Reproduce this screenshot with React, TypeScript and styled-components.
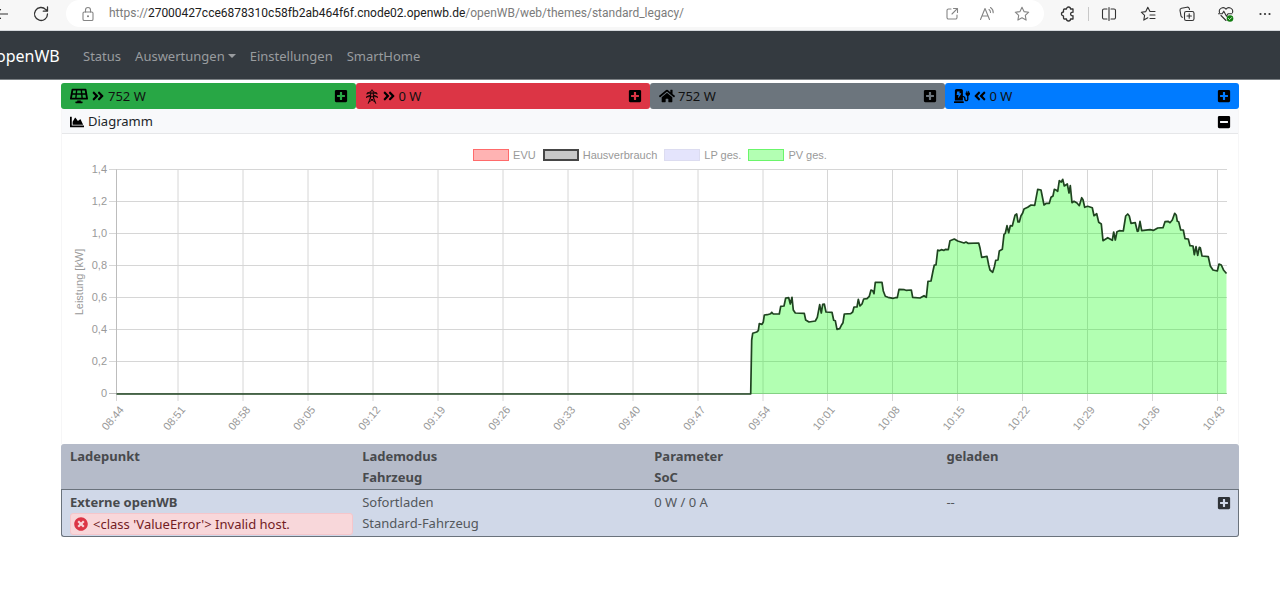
import React from "react";
import styled, { createGlobalStyle } from "styled-components";
import {
  FaAngleDoubleLeft,
  FaAngleDoubleRight,
  FaChargingStation,
  FaChartArea,
  FaHome,
  FaMinusSquare,
  FaPlusSquare,
  FaSolarPanel,
  FaTimesCircle,
} from "react-icons/fa";

const GlobalStyle = createGlobalStyle`
  *, *::before, *::after { box-sizing: border-box; }
  body {
    margin: 0;
    background: #fff;
    color: #212529;
    font-family: "Noto Sans", "Open Sans", sans-serif;
    font-size: 13px;
    line-height: 21px;
  }
  button { font: inherit; color: inherit; border: 0; padding: 0; background: none; cursor: pointer; }
`;

/* ---------- browser bar ---------- */

const BrowserBar = styled.div`
  display: flex;
  align-items: center;
  height: 31px;
  padding: 0 6px 3px 0;
  background: #f7f7f7;
  border-bottom: 1px solid #d5d8dc;
  overflow: hidden;
`;

const ToolButton = styled.button<{ $muted?: boolean }>`
  display: flex;
  flex: none;
  align-items: center;
  justify-content: center;
  width: 18px;
  height: 18px;
  color: ${(p) => (p.$muted ? "#858585" : "#333")};
`;

const NavTools = styled.div`
  display: flex;
  gap: 24px;
  width: 66px;
  margin-left: -10px;
  margin-right: 10px;
`;

const AddressBar = styled.div`
  display: flex;
  flex: 1;
  align-items: center;
  height: 27px;
  padding: 0 13px;
  border-radius: 14px;
  background: #fff;
`;

const Address = styled.div`
  flex: 1;
  min-width: 0;
  margin-left: 12px;
  overflow: hidden;
  white-space: nowrap;
  color: #7b7b7b;
  font-family: Roboto, sans-serif;
  font-size: 12px;

  b { color: #202020; font-weight: 400; }
`;

const AddressTools = styled.div`
  display: flex;
  gap: 17px;
`;

const BarTools = styled.div`
  display: flex;
  align-items: center;
  gap: 21px;
  margin-left: 15px;
`;

const Separator = styled.span`
  width: 1px;
  height: 14px;
  margin: 0 -10px;
  background: #c8c8c8;
`;

const Svg = ({ children, size = 18 }: { children: React.ReactNode; size?: number }) => (
  <svg
    width={size}
    height={size}
    viewBox="0 0 18 18"
    fill="none"
    stroke="currentColor"
    strokeWidth="1.1"
    strokeLinecap="round"
    strokeLinejoin="round"
    aria-hidden="true"
  >
    {children}
  </svg>
);

const STAR = "M9 2.3l2 4.3 4.7.6-3.4 3.2.8 4.7L9 12.8l-4.1 2.3.8-4.7L2.3 7.2 7 6.6z";

/* ---------- page navigation ---------- */

const Navbar = styled.nav`
  display: flex;
  align-items: center;
  height: 49px;
  padding-top: 2px;
  background: #343a40;
  border-bottom: 1px solid #7b8084;
  overflow: hidden;
`;

const Brand = styled.a`
  width: 66px;
  margin-left: -4px;
  margin-right: 21px;
  color: #fff;
  font-size: 16px;
  text-decoration: none;
`;

const NavLinks = styled.div`
  display: flex;
  gap: 14px;
`;

const NavLink = styled.a`
  display: flex;
  align-items: center;
  gap: 3px;
  color: #999c9f;
  text-decoration: none;
`;

const Caret = styled.span`
  border: 4px solid transparent;
  border-top-color: currentColor;
  border-bottom: 0;
`;

/* ---------- page content ---------- */

const Page = styled.main`
  padding: 3px 41px 0 61px;
`;

const Tiles = styled.div`
  display: grid;
  grid-template-columns: repeat(4, 1fr);
`;

const Tile = styled.section<{ $color: string }>`
  display: flex;
  align-items: center;
  justify-content: space-between;
  height: 26px;
  padding: 0 8px 0 9px;
  border-radius: 3px;
  background: ${(p) => p.$color};
  color: #111;

  svg { color: #000; }
`;

const TileValue = styled.div`
  display: flex;
  align-items: center;
  gap: 3px;
`;

const IconButton = styled.button`
  display: flex;
  color: #000;
`;

const Card = styled.section`
  border: 1px solid #f6f6f7;
  border-top: 0;
  border-bottom: 0;
`;

const CardHeader = styled.header`
  display: flex;
  align-items: center;
  justify-content: space-between;
  height: 25px;
  padding: 1px 7px 0 8px;
  background: #f8f9fb;
  border-bottom: 1px solid #e6e7e9;
`;

const CardTitle = styled.h2`
  display: flex;
  align-items: center;
  gap: 4px;
  margin: 0;
  font-size: 13px;
  font-weight: 400;

  svg { color: #000; }
`;

const Legend = styled.div`
  display: flex;
  justify-content: center;
  gap: 7px;
  height: 29px;
  padding-top: 14px;
`;

const LegendItem = styled.button`
  display: flex;
  align-items: center;
  gap: 4px;
  height: 14px;
  color: #999;
  font-family: "Liberation Sans", sans-serif;
  font-size: 11px;
  line-height: 14px;
`;

const Swatch = styled.span<{ $fill: string; $line: string; $strong?: boolean }>`
  width: 36px;
  height: 12px;
  background: ${(p) => p.$fill};
  border: ${(p) => (p.$strong ? 2 : 1)}px solid ${(p) => p.$line};
`;

const Plot = styled.svg`
  display: block;
  width: 100%;
  height: auto;

  text {
    fill: #999;
    font-family: "Liberation Sans", sans-serif;
    font-size: 11px;
  }
`;

const Points = styled.table`
  width: 100%;
  table-layout: fixed;
  border-collapse: separate;
  border-spacing: 0;
  color: #53575b;

  th, td {
    padding: 2px 0 0 9px;
    text-align: left;
    vertical-align: top;
  }
`;

const Column = styled.col`
  width: 24.8%;
`;

const HeadRow = styled.tr`
  height: 45px;
  color: #484a4d;

  th { background: #b5bbc9; }
  th:first-child { border-top-left-radius: 3px; }
  th:last-child { border-top-right-radius: 3px; }
`;

const PointRow = styled.tr`
  height: 48px;

  th, td {
    background: #d0d8e8;
    border: 1px solid #6a727c;
    border-width: 1px 0;
  }
  th:first-child {
    padding-left: 8px;
    border-left-width: 1px;
    border-bottom-left-radius: 3px;
    color: #484a4d;
  }
  td:last-child { border-right-width: 1px; border-bottom-right-radius: 3px; }
`;

const Split = styled.div`
  display: flex;
  align-items: center;
  justify-content: space-between;
  padding-right: 7px;
`;

const Alert = styled.div`
  display: flex;
  align-items: center;
  gap: 5px;
  height: 22px;
  padding-left: 3px;
  border: 1px solid #f5c6cb;
  border-radius: 3px;
  background: #f8d7da;
  color: #721c24;
  font-weight: 400;

  svg { color: #dc3545; }
`;

const Pylon = () => (
  <svg width="14" height="15" viewBox="-1 0 14 15" fill="none" stroke="#000" strokeWidth="0.9" aria-hidden="true">
    <path d="M4.500 9L5 2l1-1.300L7 2l.5 7M1 5.500v-1.300L5 2.700M11 5.500v-1.300L7 2.700M1 4.200h10M.7 9V7.700L5 5.800M11.300 9V7.700L7 5.800M.7 7.700h10.600M2.200 14.700L4.600 8M9.800 14.700L7.400 8M4 9.500l5 3.500M8 9.500L3 13" />
  </svg>
);

const X_TICKS: [number, string][] = [
  [116.5, "08:44"], [178, "08:51"], [243, "08:58"], [308, "09:05"], [373, "09:12"], [438, "09:19"],
  [503, "09:26"], [568, "09:33"], [633, "09:40"], [698, "09:47"], [763, "09:54"], [827.5, "10:01"],
  [892.5, "10:08"], [957.5, "10:15"], [1022.5, "10:22"], [1087.5, "10:29"], [1152.5, "10:36"], [1217.5, "10:43"],
];

const Y_TICKS = ["1,4", "1,2", "1,0", "0,8", "0,6", "0,4", "0,2", "0"];

const SERIES =
  "750.7,394 751.7,340 752.7,333.3 756.7,332 758.3,330.7 759.3,323.7 762,324.3 763.3,322 764.3,315 767.3,314.7 " +
  "770.7,313.7 771.7,312.3 773.3,314 779.3,314 780.7,306.3 784,306 785.7,298 788.7,297.7 790.3,304 792,297.3 " +
  "793.3,310 795.3,313 804.3,313.3 805.7,320 809,322 815.3,321 817.3,317.3 819.7,304.7 821.3,313 822.7,304.3 " +
  "824.3,304 826,312 832,312.3 833.7,320.3 835.3,320.7 837,329.3 839.7,328.7 841.7,324.7 843,322.7 844.3,314 " +
  "850.7,313.7 852.7,312 854,307 857,307 858.3,299.3 860,306 862,304 863.7,299 867,298.7 869.3,296.3 871,290 " +
  "872.7,290.7 874,293.7 875.3,282.3 882,282.3 883.3,291 885.3,296.3 888,297.3 893.3,298.3 895.3,297.7 897.3,297.7 " +
  "899,289.3 904.3,289.7 906,290.3 911.3,290 912.7,297.3 920,298 924,295.7 926.3,297.3 928,281.3 931,281 933,271 " +
  "934.3,265 936,265 937.7,250 939.3,250.7 941.3,249.7 944,250.3 945.3,249.3 948.3,249.7 950,240.7 954.3,239 957.7,241 " +
  "964,243 966,242 968,243.3 978.7,243 980,248 981.7,257.3 987,256.3 988.7,265 990,270 992.7,272.3 994.3,267 " +
  "995.7,260.3 998,260 999.3,251 1002.3,249.3 1004,234.3 1005.3,233.3 1007,225.7 1008.7,232.7 1010.3,225.7 1012.3,226 " +
  "1015,215.3 1016.7,214 1018,222 1019.3,222 1021,215.7 1022.7,213 1024,209 1027.7,207.3 1031,205 1034.7,205.3 " +
  "1037.7,189.3 1041,190 1044,205 1046.3,203.3 1049.3,203.3 1051,197.3 1053,196 1054.3,189.3 1056,190 1057.7,191.3 " +
  "1059.3,180.7 1061.3,182 1062.7,179.3 1064.3,186 1067.3,184 1069,193 1070.3,185.7 1072,202.7 1074,201.3 1077,203 1079.3,205.7 " +
  "1081.7,197.7 1083,199.7 1084.7,207.3 1087.7,206.3 1092.3,207.7 1094,215.7 1096.7,213.7 1098.7,222.3 1101.3,224 " +
  "1103,240.7 1107.7,237.7 1112.3,240.3 1113.7,232 1115.3,240 1117,231.7 1119.3,230.7 1123.3,231 1125.7,216 1127.7,214 " +
  "1129.3,216 1131,223.3 1135.3,222.7 1137.3,231.3 1138.3,231 1140,221.3 1141.7,230.7 1150,229.7 1153.7,230.3 1157.7,228 " +
  "1163,227.7 1165,221.7 1168,221.3 1170,222.7 1172.3,220 1174.7,213.3 1176.3,215.3 1177.3,221.3 1178.7,221.7 1180.7,230 " +
  "1183.3,230 1185,238.7 1188.3,239 1190,245.7 1193,246 1194.3,254.7 1196,246.7 1197.7,255.3 1199.3,247.3 1200.3,247.7 " +
  "1202,256 1208.3,256.7 1210.3,266 1213,270 1217.3,271 1219,264 1221.3,265 1223.7,270.3 1226.5,273.5";

const LEGEND = [
  { label: "EVU", fill: "#ffb3b3", line: "#ff6b6b" },
  { label: "Hausverbrauch", fill: "#c8c8c8", line: "#464646", strong: true },
  { label: "LP ges.", fill: "#e4e4fc", line: "#dcdcf0" },
  { label: "PV ges.", fill: "#b3ffb3", line: "#6bf56b" },
];

const PowerChart = () => (
  <Plot viewBox="62 163 1176 281" role="img" aria-label="Leistung [kW]">
    <g stroke="#d6d6d6">
      {X_TICKS.map(([x]) => (
        <path key={x} d={`M${x} 169.5V401`} />
      ))}
      {Y_TICKS.map((label, i) => (
        <path key={label} d={`M109 ${169.5 + i * 32}H1227`} />
      ))}
    </g>
    <path d="M116.5 169.500V394M109 393.500H1227" stroke="#bdbdbd" />
    <polygon points={`${SERIES} 1226.5,394`} fill="#00ff00" fillOpacity="0.3" />
    <polyline
      points={`116.5,394 ${SERIES}`}
      fill="none"
      stroke="#1f4420"
      strokeWidth="1.7"
      strokeLinejoin="round"
    />
    {Y_TICKS.map((label, i) => (
      <text key={label} x="107" y={173 + i * 32} textAnchor="end">
        {label}
      </text>
    ))}
    {X_TICKS.map(([x, label]) => (
      <text key={label} transform={`translate(${x + 8} 410) rotate(-50)`} textAnchor="end">
        {label}
      </text>
    ))}
    <text transform="translate(83 282) rotate(-90)" textAnchor="middle">
      Leistung [kW]
    </text>
  </Plot>
);

export default function App() {
  return (
    <>
      <GlobalStyle />
      <BrowserBar>
        <NavTools>
          <ToolButton aria-label="Zurück">
            <Svg><path d="M18 9H6M10.500 4.500L6 9l4.500 4.500" /></Svg>
          </ToolButton>
          <ToolButton aria-label="Aktualisieren">
            <Svg><path d="M15.500 9A6.500 6.500 0 1 1 13.800 4.600L15.300 6M15.500 2v4.200h-4.200" strokeWidth="1.3" /></Svg>
          </ToolButton>
        </NavTools>
        <AddressBar>
          <ToolButton $muted aria-label="Websiteinformationen">
            <Svg>
              <rect x="4" y="7" width="10" height="8.500" rx="1.300" />
              <path d="M6.500 7V5a2.500 2.500 0 0 1 5 0v2" />
              <circle cx="9" cy="11.200" r=".5" fill="currentColor" />
            </Svg>
          </ToolButton>
          <Address>
            https://<b>27000427cce6878310c58fb2ab464f6f.cnode02.openwb.de</b>/openWB/web/themes/standard_legacy/
          </Address>
          <AddressTools>
            <ToolButton $muted aria-label="In App öffnen">
              <Svg>
                <path d="M8 4H5.500A1.500 1.500 0 0 0 4 5.500v7A1.500 1.500 0 0 0 5.500 14h7a1.500 1.500 0 0 0 1.500-1.500V10M10.500 3.500h4v4M14.300 3.700L9 9" />
              </Svg>
            </ToolButton>
            <ToolButton $muted aria-label="Laut vorlesen">
              <Svg>
                <path d="M2.500 14.500L7 3.500l4.500 11M4 11h6M11 4.500a3.500 3.500 0 0 1 1.500 3M12.500 2.500a6 6 0 0 1 2.700 5.300" />
              </Svg>
            </ToolButton>
            <ToolButton $muted aria-label="Favorit hinzufügen">
              <Svg><path d={STAR} /></Svg>
            </ToolButton>
          </AddressTools>
        </AddressBar>
        <BarTools>
          <ToolButton aria-label="Erweiterungen">
            <Svg>
              <path d="M5.500 4h2a2 2 0 0 1 4 0h2.500v3.300a1.800 1.800 0 1 0 0 3.400V14h-2.500a2 2 0 0 1-4 0h-2a1 1 0 0 1-1-1v-2a2 2 0 0 1 0-4V5a1 1 0 0 1 1-1z" strokeWidth="1.3" />
            </Svg>
          </ToolButton>
          <Separator />
          <ToolButton aria-label="Geteilter Bildschirm">
            <Svg>
              <path d="M7 4H4a1.500 1.500 0 0 0-1.500 1.500v7A1.500 1.500 0 0 0 4 14h3M11 4h3a1.500 1.500 0 0 1 1.500 1.500v7A1.500 1.500 0 0 1 14 14h-3M9 2.500v13" />
            </Svg>
          </ToolButton>
          <ToolButton aria-label="Favoriten">
            <Svg>
              <path d="M11 6.500L8.800 2.300 6.800 6.600l-4.500.6 3.300 3.200-.8 4.700 4-2.300M11 6.500h5M11 10h5M11 13.500h5" />
            </Svg>
          </ToolButton>
          <ToolButton aria-label="Sammlungen">
            <Svg>
              <rect x="6.500" y="6.500" width="9.500" height="9" rx="1.800" />
              <path d="M11.200 8.800v4.400M9 11h4.400M4.500 12.300a2 2 0 0 1-1.500-1.500L2 5.500A2 2 0 0 1 3.500 3.300l5.500-1.100a2 2 0 0 1 2.300 1.500l.2.800" />
            </Svg>
          </ToolButton>
          <ToolButton aria-label="Browser-Essentials">
            <Svg>
              <path d="M2.500 7.500A3.700 3.700 0 0 1 9 4.200a3.700 3.700 0 0 1 6.500 3.300M4 10.500l5 5M1.500 8.800h3.700l1.600-2.600 2.700 5 1.500-2.400h4" />
              <circle cx="13" cy="13.500" r="3.300" fill="#117d10" stroke="none" />
              <path d="M11.500 13.500l1.100 1.100 2-2" stroke="#fff" strokeWidth=".8" />
            </Svg>
          </ToolButton>
          <ToolButton aria-label="Einstellungen und mehr">
            <Svg>
              <g fill="currentColor" stroke="none">
                <circle cx="4.500" cy="9" r="1.100" /><circle cx="9" cy="9" r="1.100" /><circle cx="13.500" cy="9" r="1.100" />
              </g>
            </Svg>
          </ToolButton>
        </BarTools>
      </BrowserBar>

      <Navbar>
        <Brand href="#">openWB</Brand>
        <NavLinks>
          <NavLink href="#">Status</NavLink>
          <NavLink href="#">Auswertungen<Caret /></NavLink>
          <NavLink href="#">Einstellungen</NavLink>
          <NavLink href="#">SmartHome</NavLink>
        </NavLinks>
      </Navbar>

      <Page>
        <Tiles>
          <Tile $color="#28a745">
            <TileValue><FaSolarPanel size={18} /><FaAngleDoubleRight size={14} />752 W</TileValue>
            <IconButton aria-label="PV aufklappen"><FaPlusSquare size={14} /></IconButton>
          </Tile>
          <Tile $color="#dc3545">
            <TileValue><Pylon /><FaAngleDoubleRight size={14} />0 W</TileValue>
            <IconButton aria-label="EVU aufklappen"><FaPlusSquare size={14} /></IconButton>
          </Tile>
          <Tile $color="#6c757d">
            <TileValue><FaHome size={16} />752 W</TileValue>
            <IconButton aria-label="Hausverbrauch aufklappen"><FaPlusSquare size={14} /></IconButton>
          </Tile>
          <Tile $color="#007bff">
            <TileValue><FaChargingStation size={16} /><FaAngleDoubleLeft size={14} />0 W</TileValue>
            <IconButton aria-label="Ladepunkte aufklappen"><FaPlusSquare size={14} /></IconButton>
          </Tile>
        </Tiles>

        <Card>
          <CardHeader>
            <CardTitle><FaChartArea size={14} />Diagramm</CardTitle>
            <IconButton aria-label="Diagramm zuklappen"><FaMinusSquare size={14} /></IconButton>
          </CardHeader>
          <Legend>
            {LEGEND.map((item) => (
              <LegendItem key={item.label}>
                <Swatch $fill={item.fill} $line={item.line} $strong={item.strong} />
                {item.label}
              </LegendItem>
            ))}
          </Legend>
          <PowerChart />
        </Card>

        <Points>
          <colgroup>
            <Column />
            <Column />
            <Column />
            <col />
          </colgroup>
          <thead>
            <HeadRow>
              <th scope="col">Ladepunkt</th>
              <th scope="col">Lademodus<br />Fahrzeug</th>
              <th scope="col">Parameter<br />SoC</th>
              <th scope="col">geladen</th>
            </HeadRow>
          </thead>
          <tbody>
            <PointRow>
              <th scope="row">
                Externe openWB
                <Alert><FaTimesCircle size={14} />&lt;class 'ValueError'&gt; Invalid host.</Alert>
              </th>
              <td>Sofortladen<br />Standard-Fahrzeug</td>
              <td>0 W / 0 A</td>
              <td>
                <Split>
                  <span>--</span>
                  <IconButton aria-label="Ladepunkt aufklappen"><FaPlusSquare size={14} color="#2f3338" /></IconButton>
                </Split>
              </td>
            </PointRow>
          </tbody>
        </Points>
      </Page>
    </>
  );
}
